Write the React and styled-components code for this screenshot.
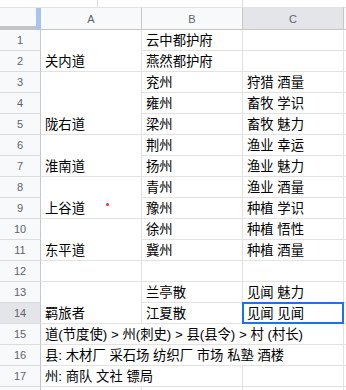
import React from "react";
import styled, { createGlobalStyle, css } from "styled-components";

const Global = createGlobalStyle`
  html, body { margin: 0; padding: 0; background: #fff; overflow: hidden; }
  body { font-family: "Liberation Sans", Arial, "Noto Sans CJK SC", sans-serif; }
`;

const Sheet = styled.div`
  width: 346px;
  height: 390px;
  overflow: hidden;
  display: grid;
  grid-template-columns: 41px 101px 101px 101px 1fr;
  grid-template-rows: 7px 23px repeat(18, 21px);
  font-family: "Liberation Sans", Arial, "Noto Sans CJK SC", sans-serif;
`;

const TopStrip = styled.div`
  grid-column: 1 / -1;
  grid-row: 1;
  display: flex;
  background: #fff;
`;

const StripGap = styled.div`
  width: ${(p) => p.$w}px;
  flex: ${(p) => (p.$w ? "none" : "1")};
`;

const StripMark = styled.div`
  width: 1px;
  background: #dadce0;
`;

const Corner = styled.div`
  grid-column: 1;
  grid-row: 2;
  box-sizing: border-box;
  background: #f8f9fa;
  border-top: 1px solid #e3e3e3;
  display: flex;
`;

const CornerFill = styled.div`
  flex: 1;
  border-bottom: 4px solid #c4c4c4;
  box-sizing: border-box;
`;

const CornerBar = styled.div`
  width: 5px;
  background: #a8c4ee;
`;

const ColHead = styled.div`
  grid-column: ${(p) => p.$col};
  grid-row: 2;
  box-sizing: border-box;
  background: ${(p) => (p.$active ? "#e3e5e8" : "#f8f9fa")};
  border-top: 1px solid #e3e3e3;
  border-right: 1px solid #c7c7c7;
  border-bottom: 1px solid #c7c7c7;
  display: flex;
  align-items: center;
  justify-content: center;
  font-size: 11px;
  color: #5f6368;
  padding-top: 1px;
`;

const RowHead = styled.div`
  grid-column: 1;
  grid-row: ${(p) => p.$row + 2};
  box-sizing: border-box;
  background: ${(p) => (p.$active ? "#e3e5e8" : "#f8f9fa")};
  border-right: 1px solid #c7c7c7;
  border-bottom: 1px solid #dcdcdc;
  display: flex;
  align-items: center;
  justify-content: center;
  font-size: 11px;
  color: #5f6368;
`;

const Cell = styled.div`
  grid-column: ${(p) => p.$col} / span ${(p) => p.$span || 1};
  grid-row: ${(p) => p.$row + 2} / span ${(p) => p.$rows || 1};
  box-sizing: border-box;
  position: relative;
  background: #fff;
  border-right: 1px solid #e2e2e2;
  border-bottom: 1px solid #e2e2e2;
  display: flex;
  align-items: flex-end;
  padding: 0 3px 1px 4px;
  font-size: 13.33px;
  line-height: 17px;
  color: #000;
  white-space: nowrap;
  overflow: visible;
  ${(p) =>
    p.$selected &&
    css`
      &::after {
        content: "";
        position: absolute;
        top: -1px;
        left: -1px;
        right: -1px;
        bottom: -1px;
        border: 2px solid #1a73e8;
        pointer-events: none;
      }
    `}
`;

const Dot = styled.span`
  position: absolute;
  left: 65px;
  top: 26px;
  width: 3px;
  height: 3px;
  border-radius: 50%;
  background: #e0303a;
`;

const merged = [
  { row: 1, rows: 2, text: "关内道" },
  { row: 3, rows: 3, text: "陇右道" },
  { row: 6, rows: 2, text: "淮南道" },
  { row: 8, rows: 2, text: "上谷道", dot: true },
  { row: 10, rows: 2, text: "东平道" },
  { row: 12, rows: 1, text: "" },
  { row: 13, rows: 2, text: "羁旅者" },
];

const bc = [
  ["云中都护府", ""],
  ["燕然都护府", ""],
  ["兖州", "狩猎 酒量"],
  ["雍州", "畜牧 学识"],
  ["梁州", "畜牧 魅力"],
  ["荆州", "渔业 幸运"],
  ["扬州", "渔业 魅力"],
  ["青州", "渔业 酒量"],
  ["豫州", "种植 学识"],
  ["徐州", "种植 悟性"],
  ["冀州", "种植 酒量"],
  ["", ""],
  ["兰亭散", "见闻 魅力"],
  ["江夏散", "见闻 见闻"],
];

export default function App() {
  const rows = Array.from({ length: 18 }, (_, i) => i + 1);
  return (
    <>
      <Global />
      <Sheet>
        <TopStrip>
          <StripGap $w={97} />
          <StripMark />
          <StripGap $w={144} />
          <StripMark />
          <StripGap />
        </TopStrip>
        <Corner>
          <CornerFill />
          <CornerBar />
        </Corner>
        <ColHead $col={2}>A</ColHead>
        <ColHead $col={3}>B</ColHead>
        <ColHead $col={4} $active>C</ColHead>
        <ColHead $col={5} />
        {rows.map((r) => (
          <RowHead key={r} $row={r} $active={r === 14}>
            {r < 18 ? r : null}
          </RowHead>
        ))}
        {merged.map((m) => (
          <Cell key={m.row} $col={2} $row={m.row} $rows={m.rows}>
            {m.text}
            {m.dot && <Dot />}
          </Cell>
        ))}
        {bc.map(([b, c], i) => (
          <React.Fragment key={i}>
            <Cell $col={3} $row={i + 1}>{b}</Cell>
            <Cell $col={4} $row={i + 1} $selected={i + 1 === 14}>{c}</Cell>
          </React.Fragment>
        ))}
        <Cell $col={2} $row={15} $span={3}>道(节度使) &gt; 州(刺史) &gt; 县(县令) &gt; 村 (村长)</Cell>
        <Cell $col={2} $row={16} $span={3}>县: 木材厂 采石场 纺织厂 市场 私塾 酒楼</Cell>
        <Cell $col={2} $row={17} $span={2}>州: 商队 文社 镖局</Cell>
        <Cell $col={4} $row={17} />
        <Cell $col={2} $row={18} />
        <Cell $col={3} $row={18} />
        <Cell $col={4} $row={18} />
        {rows.map((r) => (
          <Cell key={"d" + r} $col={5} $row={r} />
        ))}
      </Sheet>
    </>
  );
}
